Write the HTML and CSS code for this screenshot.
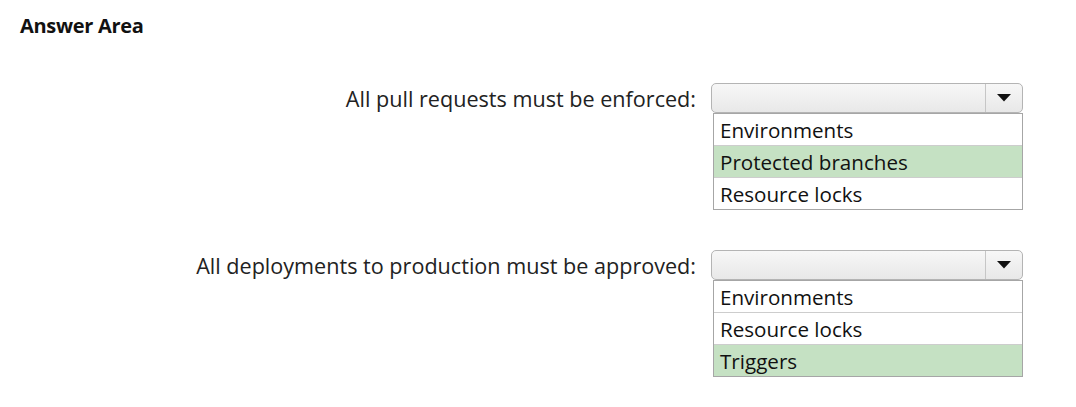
FILE: index.html
```html
<!DOCTYPE html>
<html>
<head>
<meta charset="utf-8">
<link rel="stylesheet" href="styles.css">
</head>
<body>
<div class="page">
  <h1 class="title">Answer Area</h1>
  <div class="groups">
    <div class="group">
      <div class="label">All pull requests must be enforced:</div>
      <div class="control">
        <div class="select">
          <span class="btn"><svg width="14" height="8" viewBox="0 0 14 8"><polygon points="0,0 14,0 7,7.5" fill="#111"/></svg></span>
        </div>
        <ul class="options">
          <li>Environments</li>
          <li class="picked">Protected branches</li>
          <li>Resource locks</li>
        </ul>
      </div>
    </div>
    <div class="group">
      <div class="label">All deployments to production must be approved:</div>
      <div class="control">
        <div class="select">
          <span class="btn"><svg width="14" height="8" viewBox="0 0 14 8"><polygon points="0,0 14,0 7,7.5" fill="#111"/></svg></span>
        </div>
        <ul class="options">
          <li>Environments</li>
          <li>Resource locks</li>
          <li class="picked">Triggers</li>
        </ul>
      </div>
    </div>
  </div>
</div>
</body>
</html>
```
FILE: styles.css
```css
html, body {
  margin: 0;
  background: #ffffff;
}
body {
  font-family: "Open Sans", "Noto Sans", sans-serif;
  color: #1b1b1b;
}
.page {
  padding-top: 13px;
}
.title {
  margin: 0 0 0 20px;
  font-size: 20px;
  font-weight: 700;
  line-height: 26px;
  letter-spacing: -0.3px;
  color: #111;
}
.groups {
  display: flex;
  flex-direction: column;
  gap: 40px;
  margin-top: 44px;
}
.group {
  display: grid;
  grid-template-columns: 696px 312px;
  column-gap: 15px;
  align-items: start;
}
.label {
  text-align: right;
  font-size: 21.6px;
  line-height: 32px;
  color: #222;
}
.control {
  display: flex;
  flex-direction: column;
}
.select {
  box-sizing: border-box;
  height: 30px;
  border: 1px solid #b4b4b4;
  border-radius: 5px;
  background: linear-gradient(#f7f7f7, #e8e8e8);
  display: flex;
  justify-content: flex-end;
}
.btn {
  width: 36px;
  border-left: 1px solid #c6c6c6;
  display: flex;
  align-items: center;
  justify-content: center;
}
.options {
  list-style: none;
  margin: 0 0 0 2px;
  padding: 0;
  width: 310px;
  box-sizing: border-box;
  border: 1px solid #a6a6a6;
}
.options li {
  height: 31px;
  line-height: 33px;
  padding-left: 6px;
  font-size: 20.6px;
  color: #111;
  border-bottom: 1px solid #cdcdcd;
}
.options li:last-child {
  border-bottom: none;
}
.options li.picked {
  background: #c5e1c3;
}
```
